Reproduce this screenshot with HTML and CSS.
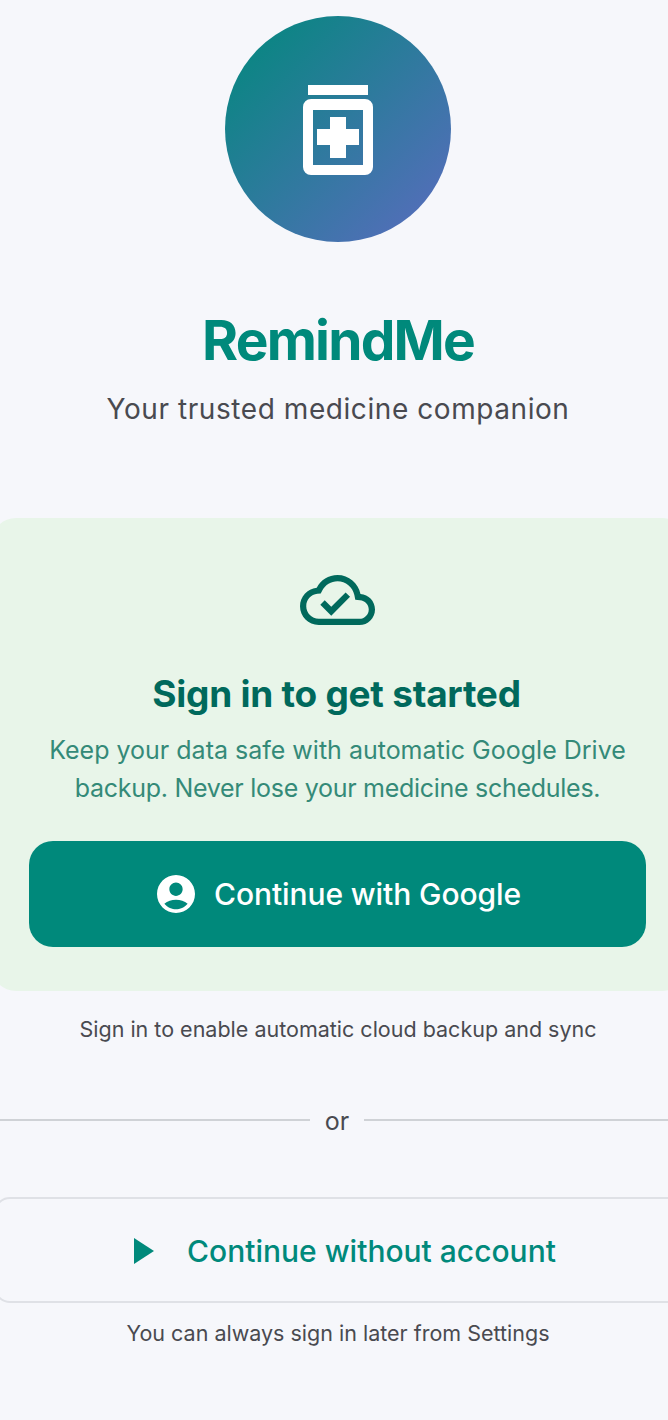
FILE: index.html
```html
<!DOCTYPE html>
<html>
<head>
  <meta charset="utf-8">
  <meta name="viewport" content="width=device-width, initial-scale=1">
  <title>RemindMe</title>
  <link rel="stylesheet" href="styles.css">
</head>
<body>
<div class="page">
  <div class="logo">
    <svg class="logo-icon" width="70" height="91" viewBox="0 0 70 91">
      <rect x="5" y="0" width="60" height="10" fill="#fff"/>
      <path fill="#fff" fill-rule="evenodd" d="M8 14h54a8 8 0 0 1 8 8v60a8 8 0 0 1-8 8H8a8 8 0 0 1-8-8V22a8 8 0 0 1 8-8zM10 25v55h50V25z"/>
      <path fill="#fff" d="M27 32h16v12h13v16H43v13H27V60H14V44h13z"/>
    </svg>
  </div>
  <h1 class="title">RemindMe</h1>
  <p class="tagline">Your trusted medicine companion</p>

  <div class="card">
    <svg class="cloud" width="75" height="50" viewBox="0 4 24 16">
      <path fill="#00695c" d="M19.350 10.040C18.670 6.590 15.640 4 12 4 9.110 4 6.600 5.640 5.350 8.040 2.340 8.360 0 10.910 0 14c0 3.310 2.690 6 6 6h13c2.760 0 5-2.240 5-5 0-2.640-2.050-4.780-4.650-4.960zM19 18H6c-2.210 0-4-1.790-4-4 0-2.050 1.530-3.760 3.560-3.970l1.070-.11.5-.95C8.080 7.140 9.940 6 12 6c2.620 0 4.880 1.860 5.390 4.430l.3 1.500 1.530.11c1.560.1 2.780 1.410 2.780 2.960 0 1.650-1.350 3-3 3zm-9-3.820l-2.090-2.090L6.500 13.500 10 17l6.010-6.010-1.410-1.410z"/>
    </svg>
    <h2 class="card-title">Sign in to get started</h2>
    <p class="card-text">Keep your data safe with automatic Google Drive<br><span class="tight">backup. Never lose your medicine schedules.</span></p>
    <button class="google-btn">
      <svg width="38" height="38" viewBox="2 2 20 20">
        <path fill="#fff" d="M12 2C6.480 2 2 6.480 2 12s4.480 10 10 10 10-4.480 10-10S17.520 2 12 2zm0 4c1.930 0 3.500 1.570 3.500 3.500S13.930 13 12 13s-3.500-1.570-3.500-3.500S10.070 6 12 6zm0 14c-2.030 0-4.430-.82-6.140-2.880C7.550 15.800 9.680 15 12 15s4.450.8 6.140 2.120C16.430 19.180 14.030 20 12 20z"/>
      </svg>
      <span>Continue with Google</span>
    </button>
  </div>

  <p class="note">Sign in to enable automatic cloud backup and sync</p>

  <div class="divider">
    <span class="line"></span>
    <span class="or">or</span>
    <span class="line"></span>
  </div>

  <button class="guest-btn">
    <svg width="20" height="26" viewBox="0 0 20 26"><path fill="#00897b" d="M0 0l20 13L0 26z"/></svg>
    <span>Continue without account</span>
  </button>

  <p class="later">You can always sign in later from Settings</p>
</div>
</body>
</html>
```

FILE: styles.css
```css
html, body { margin: 0; padding: 0; }
body { background: #f6f7fb; font-family: Inter, "Noto Sans", sans-serif; overflow: hidden; }
.page { width: 668px; height: 1420px; padding-left: 8px; box-sizing: border-box; display: flex; flex-direction: column; align-items: center; overflow: hidden; }

.logo { width: 226px; height: 226px; margin-top: 16px; border-radius: 50%; flex: none; display: flex; align-items: center; justify-content: center; background: linear-gradient(135deg, #00897b, #5c6bc0); }
.logo-icon { margin-top: 3px; }
.title { margin: 65px 0 0; font-size: 55px; line-height: 66px; font-weight: 700; letter-spacing: -1.8px; color: #00897b; }
.tagline { margin: 18px 0 0; font-size: 28px; line-height: 36px; letter-spacing: 0.57px; color: #494a50; }

.card { align-self: stretch; margin: 91px -18px 0 -16px; padding: 57px 3px 0 0; height: 473px; box-sizing: border-box; border-radius: 24px; background: #e8f5e9; display: flex; flex-direction: column; align-items: center; flex: none; }
.cloud { flex: none; }
.card-title { margin: 46px 2px 0 0; font-size: 37px; line-height: 46px; font-weight: 700; letter-spacing: -0.25px; color: #00695c; }
.card-text { margin: 14px 0 0; font-size: 25px; line-height: 38px; text-align: center; color: #348a78; white-space: nowrap; }
.tight { letter-spacing: -0.28px; }
.google-btn { margin-top: 34px; width: 617px; height: 106px; padding: 0 0 0 3px; flex: none; border: 0; border-radius: 24px; background: #00897b; color: #fff; font: 500 30px Inter, sans-serif; letter-spacing: -0.1px; display: flex; align-items: center; justify-content: center; gap: 19px; }

.note { margin: 24px 0 0; font-size: 21.500px; line-height: 28px; color: #494a50; }

.divider { align-self: stretch; margin: 60px -8px 0 -10px; display: flex; align-items: center; }
.line { flex: 1; height: 2px; background: #cfd2d6; }
.or { width: 54px; padding-top: 2px; text-align: center; font-size: 25px; line-height: 32px; color: #494a50; }

.guest-btn { align-self: stretch; margin: 60px -22px 0 -14px; padding: 2px 0 0 6px; height: 106px; flex: none; box-sizing: border-box; border: 2px solid #dfe1e6; border-radius: 16px; background: transparent; color: #00897b; font: 500 30px Inter, sans-serif; display: flex; align-items: center; justify-content: center; gap: 33px; }

.later { margin: 16px 0 0; font-size: 21.500px; line-height: 28px; color: #494a50; }
```
